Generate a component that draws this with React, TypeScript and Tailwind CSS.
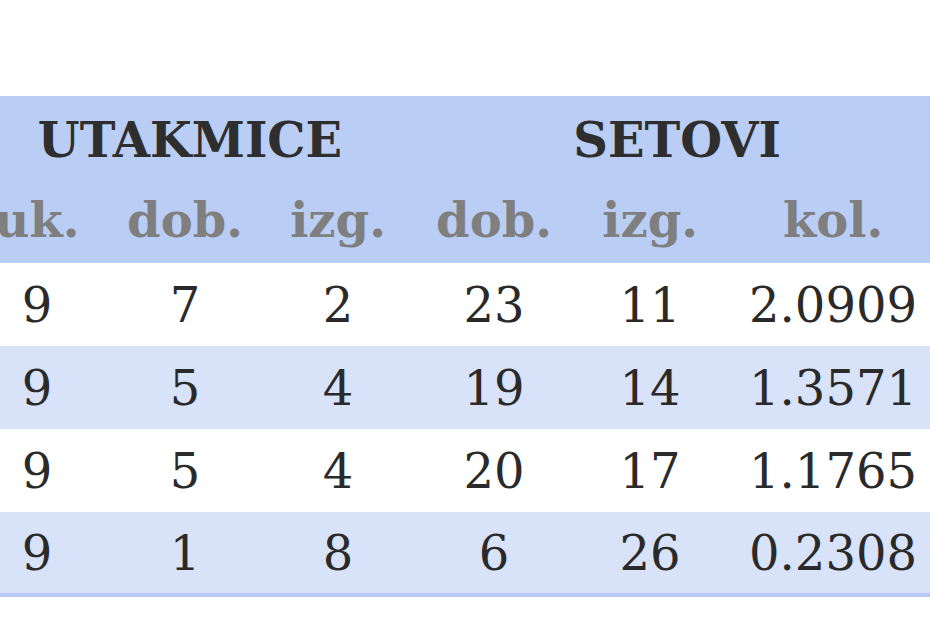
const rows = [
  ['9', '7', '2', '23', '11', '2.0909'],
  ['9', '5', '4', '19', '14', '1.3571'],
  ['9', '5', '4', '20', '17', '1.1765'],
  ['9', '1', '8', '6', '26', '0.2308'],
]

const subHeads = ['uk.', 'dob.', 'izg.', 'dob.', 'izg.', 'kol.']

export default function App() {
  return (
    <div className="w-[930px] h-[620px] overflow-hidden bg-white pt-[96px] font-['DejaVu_Serif',serif]">
      <table className="-ml-[36px] w-[974px] table-fixed border-collapse text-[48px] leading-none">
        <colgroup>
          <col className="w-[146px]" />
          <col className="w-[150px]" />
          <col className="w-[156px]" />
          <col className="w-[156px]" />
          <col className="w-[156px]" />
          <col className="w-[210px]" />
        </colgroup>
        <thead className="bg-[#b9cdf5]">
          <tr className="h-[84px]">
            <th colSpan={3} className="text-center font-bold text-[#2e2e2e] pt-[4px]">UTAKMICE</th>
            <th colSpan={3} className="text-center font-bold text-[#2e2e2e] pt-[4px]">SETOVI</th>
          </tr>
          <tr className="h-[83px]">
            {subHeads.map((h, i) => (
              <th key={i} className="text-center font-bold text-[#7f7f7f] pb-[4px]">{h}</th>
            ))}
          </tr>
        </thead>
        <tbody className="border-b-[4px] border-[#b7cbf5]">
          {rows.map((r, i) => (
            <tr key={i} className={`h-[83px] ${i % 2 ? 'bg-[#d8e2f8]' : 'bg-white'}`}>
              {r.map((c, j) => (
                <td key={j} className="text-center text-[#2a2a2a]">{c}</td>
              ))}
            </tr>
          ))}
        </tbody>
      </table>
    </div>
  )
}
